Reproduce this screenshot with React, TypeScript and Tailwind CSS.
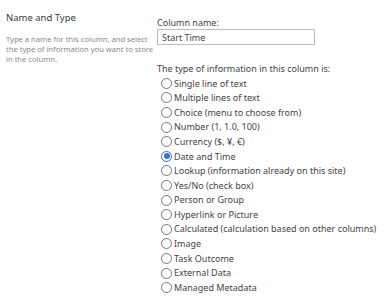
import React, { useState } from "react";

const types = [
	"Single line of text",
	"Multiple lines of text",
	"Choice (menu to choose from)",
	"Number (1, 1.0, 100)",
	"Currency ($, ¥, €)",
	"Date and Time",
	"Lookup (information already on this site)",
	"Yes/No (check box)",
	"Person or Group",
	"Hyperlink or Picture",
	"Calculated (calculation based on other columns)",
	"Image",
	"Task Outcome",
	"External Data",
	"Managed Metadata",
];

const Radio: React.FC<{ checked: boolean }> = ({ checked }) => (
	<span
		className={`flex items-center justify-center w-[11px] h-[11px] rounded-full border shrink-0 ${
			checked ? "border-[#3b6fd4]" : "border-[#777777]"
		}`}
	>
		{checked && <span className="w-[6px] h-[6px] rounded-full bg-[#3b6fd4]" />}
	</span>
);

const App: React.FC = () => {
	const [selected, setSelected] = useState("Date and Time");
	const [name, setName] = useState("Start Time");

	return (
		<div
			className="flex w-[391px] h-[308px] bg-white text-[#444444] overflow-hidden"
			style={{ fontFamily: '"Noto Sans", "Open Sans", sans-serif' }}
		>
			<div className="w-[151px] shrink-0 pl-[6px] pt-[11px]">
				<div className="text-[9.5px] leading-[14px] text-[#3a3a3a]">Name and Type</div>
				<div className="mt-[9px] text-[7.6px] leading-[10px] text-[#8a8a8a] whitespace-nowrap">
					Type a name for this column, and select
					<br />
					the type of information you want to store
					<br />
					in the column.
				</div>
			</div>
			<div className="flex-1 pl-[6px] pt-[16px]">
				<div className="text-[9px] leading-[13px]">Column name:</div>
				<input
					value={name}
					onChange={(e) => setName(e.target.value)}
					className="block w-[158px] h-[16px] border border-[#bdbdbd] px-[4px] text-[9px] text-[#444] outline-none"
				/>
				<div className="mt-[17px] text-[9px] leading-[13px]">
					The type of information in this column is:
				</div>
				<div className="flex flex-col mt-[1px] pl-[4px]">
					{types.map((t) => (
						<label
							key={t}
							onClick={() => setSelected(t)}
							className="flex items-center gap-[2px] h-[14.6px] text-[9px] cursor-pointer"
						>
							<Radio checked={selected === t} />
							<span>{t}</span>
						</label>
					))}
				</div>
			</div>
		</div>
	);
};

export default App;
